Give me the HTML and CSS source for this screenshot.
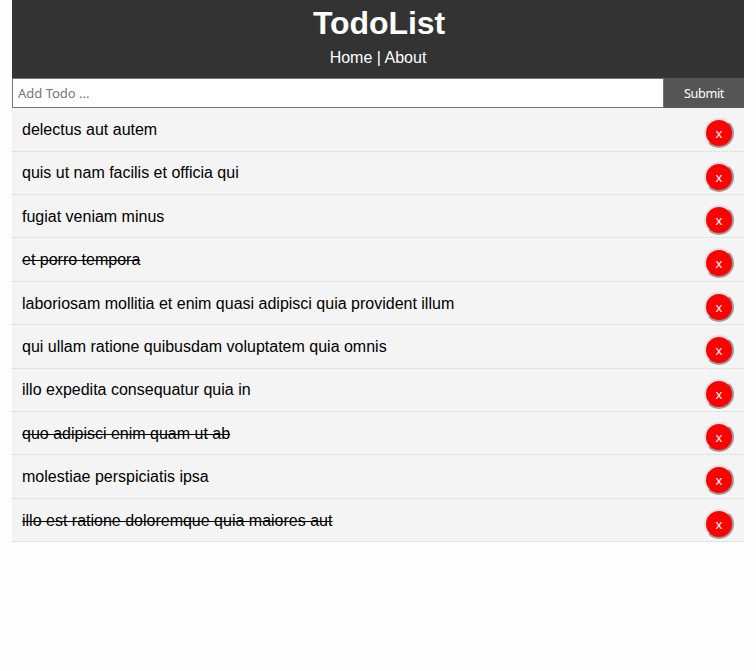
FILE: index.html
```html
<!DOCTYPE html>
<html lang="en">
<head>
<meta charset="utf-8">
<title>TodoList</title>
<link rel="stylesheet" href="styles.css">
</head>
<body>
<div class="container">
<header class="header">
<h1>TodoList</h1>
<nav><a href="#">Home</a> | <a href="#about">About</a></nav>
</header>
<form class="add-form">
<input class="add-input" type="text" placeholder="Add Todo ...">
<button class="submit" type="button">Submit</button>
</form>
<ul class="todos">
<li class="todo"><span>delectus aut autem</span><button class="delete">x</button></li>
<li class="todo"><span>quis ut nam facilis et officia qui</span><button class="delete">x</button></li>
<li class="todo"><span>fugiat veniam minus</span><button class="delete">x</button></li>
<li class="todo done"><span>et porro tempora</span><button class="delete">x</button></li>
<li class="todo"><span>laboriosam mollitia et enim quasi adipisci quia provident illum</span><button class="delete">x</button></li>
<li class="todo"><span>qui ullam ratione quibusdam voluptatem quia omnis</span><button class="delete">x</button></li>
<li class="todo"><span>illo expedita consequatur quia in</span><button class="delete">x</button></li>
<li class="todo done"><span>quo adipisci enim quam ut ab</span><button class="delete">x</button></li>
<li class="todo"><span>molestiae perspiciatis ipsa</span><button class="delete">x</button></li>
<li class="todo done"><span>illo est ratione doloremque quia maiores aut</span><button class="delete">x</button></li>
</ul>
</div>
</body>
</html>
```
FILE: styles.css
```css
* { box-sizing: border-box; margin: 0; padding: 0; }
body { background: #fefefe; color: #000; font: 16px/22.4px "Liberation Sans", Arial, sans-serif; }
.container { margin: 0 12px; }
.header { height: 78.2px; background: #333; color: #fff; text-align: center; }
.header h1 { padding-left: 2px; font-size: 32px; line-height: 46px; letter-spacing: -0.1px; }
.header nav { line-height: 24px; }
.header a { color: inherit; text-decoration: none; }
.add-form { display: flex; height: 30px; }
.add-input { flex: 1; min-width: 0; padding: 5px; border: 1px solid #767676; background: #fff; font: 13px "Noto Sans", sans-serif; }
.add-input::placeholder { color: #757575; }
.submit { width: 80px; border: 0; background: #555; color: #fff; font: 12.7px "Noto Sans", sans-serif; letter-spacing: -0.4px; }
.todos { list-style: none; }
.todo { display: flex; justify-content: space-between; height: 43.4px; padding: 10px 10px 0; border-bottom: 1px dotted #d4d4d4; background: #f4f4f4; }
.todo span { padding-top: 0.86px; }
.done span { text-decoration: line-through; }
.delete { width: 30px; height: 30px; border: 2px solid; border-color: #e1e1e1 #999 #999 #e1e1e1; border-radius: 50%; background: #f00; color: #fff; font: 13px "Noto Sans", sans-serif; }
```
